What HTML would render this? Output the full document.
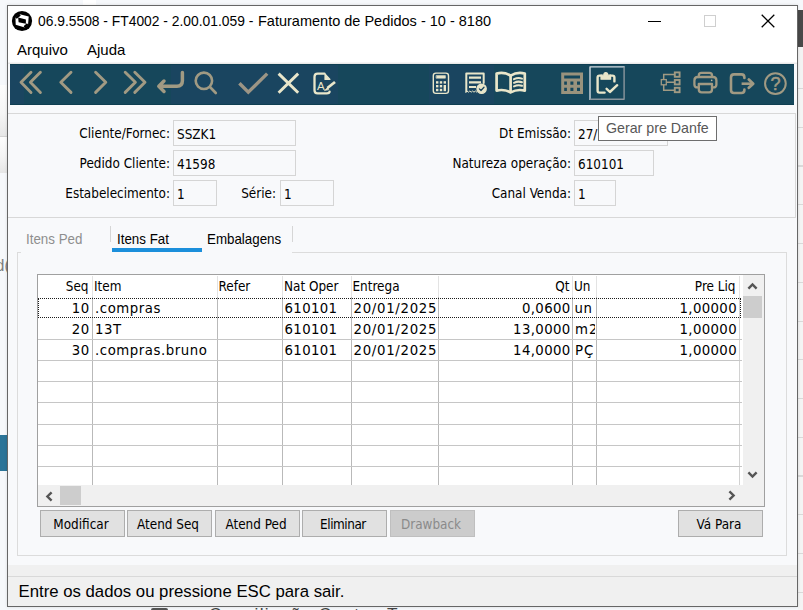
<!DOCTYPE html>
<html lang="pt-BR">
<head>
<meta charset="utf-8">
<title>Faturamento de Pedidos</title>
<style>
*{box-sizing:border-box;margin:0;padding:0}
html,body{width:803px;height:610px;overflow:hidden}
body{position:relative;background:#f6f8fb;font-family:"Liberation Sans",sans-serif;color:#000}
.a{position:absolute}
.t{position:absolute;white-space:nowrap;transform-origin:0 50%}
.tr{position:absolute;white-space:nowrap;text-align:right;transform-origin:100% 50%}
.th{font-family:"DejaVu Sans Condensed","DejaVu Sans",sans-serif;font-size:13.4px;line-height:16px;color:#000}
.vd{font-family:"DejaVu Sans",sans-serif;font-size:13.3px;letter-spacing:.36px;line-height:16px;color:#000}
.inp{position:absolute;background:#f8f9fb;border:1px solid #d5d5d5;height:26px}
.btn{position:absolute;top:510px;width:85px;height:27px;background:#e1e1e1;border:1px solid #adadad}
.bt{position:absolute;top:516.5px;width:85px;margin-left:-1.5px;text-align:center;white-space:nowrap}
.vl{position:absolute;width:1px;background:#b9b9b9}
.hl{position:absolute;height:1px;background:#c6c6c6}
svg{position:absolute;overflow:visible}
</style>
</head>
<body>
<!-- fragments of other windows behind -->
<div class="a" style="left:83px;top:0;width:13px;height:5px;background:#fff"></div>
<div class="a" style="left:0;top:85px;width:7px;height:51px;background:linear-gradient(to bottom,#fdfdfd 0,#f6f6f6 55%,#e7e7e7 100%)"></div>
<div class="a" style="left:0;top:136px;width:7px;height:1px;background:#d4d4d4"></div>
<div class="a" style="left:0;top:137px;width:7px;height:36px;background:linear-gradient(to bottom,#fdfdfd 0,#f4f4f4 55%,#e6e6e6 100%)"></div>
<div class="a" style="left:0;top:435px;width:7px;height:36px;background:#2b7498"></div>
<div class="a" style="left:798px;top:10px;width:5px;height:37px;background:#494949"></div>
<div class="a" style="left:798px;top:47px;width:5px;height:41px;background:#f3f3f3"></div>
<div class="a" style="left:798px;top:88px;width:5px;height:522px;background:repeating-linear-gradient(to bottom,#d9d9d9 0,#d9d9d9 1px,#f4f4f4 1px,#f4f4f4 38.75px)"></div>
<div class="t" style="left:-4.5px;top:256px;font-size:16px;line-height:20px;color:#7d7d7d">d(</div>
<div class="t" style="left:209px;top:605.6px;font-size:17.3px;letter-spacing:1.3px;line-height:16px;color:#444">Conciliação Contas Trans</div>
<div class="a" style="left:151px;top:608px;width:17px;height:2px;background:#555;border-radius:2px 2px 0 0"></div>

<!-- window -->
<div class="a" id="win" style="left:7px;top:5px;width:791px;height:602px;background:#f8f9fb;border:1px solid #666;box-shadow:0 0 3px rgba(0,0,0,.13)"></div>
<div class="a" style="left:8px;top:6px;width:789px;height:58px;background:#fff"></div>

<!-- title bar -->
<svg style="left:0;top:0" width="40" height="40" viewBox="0 0 40 40">
  <circle cx="22" cy="21" r="10.1" fill="#000"/>
  <path d="M19.8 14.3 L28.7 16.4 L28.1 24.4 L24.8 27.4 L15.7 24.8 L15.5 17.6 Z" fill="#fff"/>
  <path d="M18.2 17.6 L25.9 19.4 L25.9 23.8 L18.6 22.3 Z" fill="#000"/>
  <path d="M15.1 17.3 L19.5 13.9 L20.8 15.6 L16.8 18.8 Z M25 27.9 L28.4 24.7 L26.9 23.2 L23.6 26.2 Z" fill="#000"/>
</svg>
<div class="t" id="ttl" style="left:38.4px;top:12px;font-size:15px;line-height:18px;transform:scaleX(.922)">06.9.5508 - FT4002 - 2.00.01.059 - </div>
<div class="t" id="ttl2" style="left:257.6px;top:12px;font-size:15px;line-height:18px;transform:scaleX(.967)">Faturamento de Pedidos - 10 - 8180</div>
<div class="t" id="m1" style="left:17px;top:41px;font-size:15px;line-height:18px">Arquivo</div>
<div class="t" id="m2" style="left:87px;top:41px;font-size:15px;line-height:18px">Ajuda</div>
<div class="a" style="left:648px;top:21px;width:13px;height:1px;background:#000"></div>
<div class="a" style="left:704px;top:15px;width:12px;height:12px;border:1px solid #cfcfcf"></div>
<svg style="left:761px;top:14px" width="14" height="14" viewBox="0 0 14 14"><path d="M0.7 0.7 L13.3 13.3 M13.3 0.7 L0.7 13.3" stroke="#000" stroke-width="1.25" fill="none"/></svg>

<!-- toolbar -->
<div class="a" style="left:10px;top:64px;width:784px;height:41px;background:#16475b"></div>
<div class="a" style="left:10px;top:64px;width:14px;height:41px;background:#1a4560"></div>
<div class="a" style="left:171px;top:64px;width:167px;height:41px;background:#1a4560"></div>
<div class="a" style="left:429px;top:64px;width:65px;height:41px;background:#1a4560"></div>
<div class="a" style="left:10px;top:64px;width:784px;height:1px;background:#103f53"></div>
<div class="a" style="left:10px;top:104px;width:784px;height:1px;background:#0f3e51"></div>
<div class="a" style="left:8px;top:62px;width:789px;height:1px;background:#f5f5f5"></div>
<div class="a" style="left:8px;top:63px;width:789px;height:1px;background:#e9e9e9"></div>
<svg style="left:0;top:0" width="803" height="610" viewBox="0 0 803 610" fill="none" stroke-linecap="round" stroke-linejoin="round">
<g stroke="#a19a83" stroke-width="2.9">
<path d="M31 72.3 L21 82.3 L31 92.4 M40.4 72.3 L30.4 82.3 L40.4 92.4"/>
<path d="M71 72.3 L60.8 82.3 L71 92.4"/>
<path d="M95.6 72.3 L105.8 82.3 L95.6 92.4"/>
<path d="M125.2 72.3 L135.4 82.3 L125.2 92.4 M134.8 72.3 L145 82.3 L134.8 92.4"/>
<path d="M182.4 72.6 L182.4 80.8 Q182.4 86.2 177 86.2 L159.4 86.2 M164 81 L158.8 86.2 L164 91.4" stroke-width="3.5"/>
</g>
<g stroke="#a19a83" stroke-width="2.6">
<circle cx="203.9" cy="80.8" r="8.2"/>
<path d="M210 87 L215.8 93"/>
</g>
<path d="M239.4 83.2 L248.3 92.2 L267.2 73.6" stroke="#9c9585" stroke-width="3.4" stroke-linecap="butt" stroke-linejoin="miter"/>
<path d="M278.6 73.6 L298.2 92.8 M298.2 73.6 L278.6 92.8" stroke="#e9e6ca" stroke-width="2.9" stroke-linecap="butt"/>
<!-- document edit -->
<g stroke="#e9e6ca" stroke-width="2.3">
<path d="M324.4 73.6 L317.6 73.6 Q314.5 73.6 314.5 76.7 L314.5 90.3 Q314.5 93.4 317.6 93.4 L326.6 93.4 Q329.6 93.4 329.6 91.6"/>
<path d="M325 73.8 L330 79.4 L325 79.4 Z" fill="#e9e6ca" stroke-width="1.2"/>
<path d="M327.4 88 L335 82" stroke-width="2.8" stroke-linecap="butt"/><path d="M324.6 90.4 L327.8 87.2 L328.6 89.4 Z" fill="#e9e6ca" stroke-width=".6"/>
</g>
<text x="317" y="90.2" font-family="Liberation Sans, sans-serif" font-size="11.5" fill="#e9e6ca" stroke="none">A</text>
<!-- calculator -->
<g stroke="#e9e6ca">
<rect x="433.3" y="73.1" width="15.2" height="20.3" rx="2.6" stroke-width="1.4"/>
<rect x="436.4" y="75.6" width="9" height="2.6" fill="#e9e6ca" stroke-width=".6"/>
<g fill="#e9e6ca" stroke="none">
<rect x="436" y="81.2" width="2.4" height="2.4"/><rect x="439.8" y="81.2" width="2.4" height="2.4"/><rect x="443.6" y="81.2" width="2.4" height="2.4"/>
<rect x="436" y="85" width="2.4" height="2.4"/><rect x="439.8" y="85" width="2.4" height="2.4"/><rect x="443.6" y="85" width="2.4" height="6.2"/>
<rect x="436" y="88.8" width="2.4" height="2.4"/><rect x="439.8" y="88.8" width="2.4" height="2.4"/>
</g>
</g>
<!-- receipt with check -->
<g stroke="#e9e6ca" stroke-width="2">
<path d="M466.3 91.6 L466.3 73.5 L483.7 73.5 L483.7 83"/>
<path d="M469 77.6 L481 77.6 M469 82.3 L481 82.3 M469 87 L476 87" stroke-width="2.2" stroke-linecap="butt"/>
<path d="M465.6 92.2 l1.4 -1.2 l1.4 1.2 l1.4 -1.2 l1.4 1.2 l1.4 -1.2 l1.4 1.2 l1.4 -1.2 l1.4 1.2" stroke-width="1"/>
<circle cx="481.6" cy="88.8" r="4.6" fill="#e9e6ca" stroke-width="1.4"/>
<path d="M479.4 88.9 L481 90.5 L484 87.3" stroke="#1a4560" stroke-width="1.3"/>
</g>
<!-- book -->
<g stroke="#e9e6ca" stroke-width="2.7">
<path d="M510.6 75.6 Q504 71.6 496.6 73.6 L496.6 90.6 Q504 88.8 510.6 92.4 Q517.4 88.8 524.8 90.6 L524.8 73.6 Q517.4 71.6 510.6 75.6 Z"/>
<path d="M510.6 75.6 L510.6 92"/>
<path d="M514 79.2 Q518 77.2 522 78.6 M514 82.8 Q518 80.8 522 82.2 M514 86.4 Q518 84.4 522 85.8" stroke-width="2"/>
</g>
<!-- table -->
<path fill-rule="evenodd" fill="#9a937d" stroke="none" d="M561.2 72.6 H583 V94 H561.2 Z M564.2 75.4 V78.6 H580 V75.4 Z M564.2 81.6 V84.8 H566.9 V81.6 Z M570.4 81.6 V84.8 H573.4 V81.6 Z M577 81.6 V84.8 H580 V81.6 Z M564.2 87.8 V91 H566.9 V87.8 Z M570.4 87.8 V91 H573.4 V87.8 Z M577 87.8 V91 H580 V87.8 Z"/>
<!-- focus frame + clipboard check -->
<path d="M590 99.2 V66.9 H624" stroke="#d3dbe1" stroke-width="1.4" stroke-linecap="square"/><path d="M624.1 67.6 V99.2 H590.6" stroke="#8b969d" stroke-width="1.4" stroke-linecap="square"/>
<g stroke="#e9e6ca" stroke-width="2.4">
<path d="M601 75.6 L599.4 75.6 Q597.6 75.6 597.6 77.4 L597.6 90.8 Q597.6 92.6 599.4 92.6 L604.6 92.6"/>
<path d="M610.4 75.6 L612.4 75.6 Q614.4 75.6 614.4 77.4 L614.4 81.4"/>
<path d="M601 79.2 L601 75.2 L603.8 75.2 Q603.9 72.6 605.8 72.6 Q607.7 72.6 607.8 75.2 L610.6 75.2 L610.6 79.2 Z" fill="#e9e6ca" stroke-width="1.2"/>
<path d="M606.6 88.8 L609.9 92 L617.2 85.2" stroke-width="2.4"/>
</g>
<!-- hierarchy -->
<g stroke="#a19a83" stroke-width="1.3" stroke-linejoin="miter" stroke-linecap="butt">
<rect x="661.3" y="79.6" width="5" height="5.2"/>
<rect x="674.8" y="72.4" width="4.8" height="4.4" stroke-width="1.9"/>
<rect x="674.8" y="80" width="4.8" height="4.4" stroke-width="1.9"/>
<rect x="674.8" y="87.8" width="4.8" height="4.4" stroke-width="1.9"/>
<path d="M663.7 79.6 V74.4 H674.8 M666.3 82.2 H674.8 M663.7 84.8 V90.2 H674.8" stroke-width="1.5"/>
</g>
<!-- printer -->
<g stroke="#a19a83" stroke-width="2.3">
<path d="M698.8 77 L698.8 75.4 Q698.8 72.8 701.4 72.8 L709.4 72.8 Q712 72.8 712 75.4 L712 77"/>
<path d="M698.8 87.4 L697.4 87.4 Q694.4 87.4 694.4 84.4 L694.4 80.4 Q694.4 77 697.8 77 L713 77 Q716.4 77 716.4 80.4 L716.4 84.4 Q716.4 87.4 713.4 87.4 L712 87.4"/>
<path d="M698.8 84 L712 84 L712 89.6 Q712 92.4 709.2 92.4 L701.6 92.4 Q698.8 92.4 698.8 89.6 Z"/>
</g>
<circle cx="711.7" cy="80.4" r="0.8" fill="#bdb8a3" stroke="none"/>
<!-- exit -->
<g stroke="#a19a83" stroke-width="2.6">
<path d="M744.4 78 L744.4 77.4 Q744.4 74.4 741.4 74.4 L734 74.4 Q731 74.4 731 77.4 L731 90 Q731 93 734 93 L741.4 93 Q744.4 93 744.4 90 L744.4 89.6"/>
<path d="M741.6 83.7 L751.6 83.7" stroke-linecap="butt"/><path d="M748.8 79.6 L753.2 83.7 L748.8 87.8" stroke-width="2.8"/>
</g>
<!-- help -->
<circle cx="775.4" cy="83.6" r="10.35" stroke="#a19a83" stroke-width="2"/>
<text x="775.4" y="90.2" text-anchor="middle" font-family="Liberation Sans, sans-serif" font-size="18" fill="#a19a83" stroke="#a19a83" stroke-width=".5">?</text>
</svg>

<!-- upper panel -->
<div class="a" style="left:8px;top:113px;width:788px;height:105px;border:1px solid #d8d8d8;border-left:none;background:#f8f9fb"></div>

<div class="tr th" id="l1" style="right:633px;top:126px">Cliente/Fornec:</div>
<div class="inp" style="left:173px;top:120px;width:123px"></div>
<div class="t th" id="i1" style="left:177px;top:127px">SSZK1</div>
<div class="tr th" id="l2" style="right:633px;top:156px">Pedido Cliente:</div>
<div class="inp" style="left:173px;top:150px;width:123px"></div>
<div class="t th" id="i2" style="left:177px;top:157px">41598</div>
<div class="tr th" id="l3" style="right:633px;top:186px">Estabelecimento:</div>
<div class="inp" style="left:173px;top:180px;width:44px"></div>
<div class="t th" id="i3" style="left:177px;top:187px">1</div>
<div class="tr th" id="l4" style="right:527px;top:186px">Série:</div>
<div class="inp" style="left:280px;top:180px;width:54px"></div>
<div class="t th" id="i4" style="left:284px;top:187px">1</div>

<div class="tr th" id="l5" style="right:232px;top:126px">Dt Emissão:</div>
<div class="inp" style="left:574px;top:120px;width:94px"></div>
<div class="t th" id="i5" style="left:578px;top:127px">27/</div>
<div class="tr th" id="l6" style="right:232px;top:156px">Natureza operação:</div>
<div class="inp" style="left:574px;top:150px;width:80px"></div>
<div class="t th" id="i6" style="left:578px;top:157px">610101</div>
<div class="tr th" id="l7" style="right:232px;top:186px">Canal Venda:</div>
<div class="inp" style="left:574px;top:180px;width:42px"></div>
<div class="t th" id="i7" style="left:578px;top:187px">1</div>

<!-- tooltip -->
<div class="a" style="left:598px;top:116px;width:119px;height:25px;background:#fff;border:1px solid #6e6e6e"></div>
<div class="t" id="tip" style="left:606px;top:119px;font-size:15px;line-height:18px;color:#575757;transform:scaleX(.948)">Gerar pre Danfe</div>

<!-- tabs -->
<div class="t" id="tb1" style="left:25.6px;top:231px;font-size:15px;line-height:16px;color:#8e8e8e;transform:scaleX(.89)">Itens Ped</div>
<div class="a" style="left:110px;top:226px;width:1px;height:16px;background:#d6d6d6"></div>
<div class="t" id="tb2" style="left:116.5px;top:231px;font-size:15px;line-height:16px;transform:scaleX(.89)">Itens Fat</div>
<div class="a" style="left:112px;top:248px;width:90px;height:4px;background:#1b8fdb"></div>
<div class="t" id="tb3" style="left:207px;top:231px;font-size:15px;line-height:16px;transform:scaleX(.89)">Embalagens</div>
<div class="a" style="left:292px;top:226px;width:1px;height:16px;background:#d6d6d6"></div>

<!-- tab page frame -->
<div class="a" style="left:17px;top:252px;width:770px;height:304px;border:1px solid #dcdcdc;border-top:none"></div>
<div class="a" style="left:17px;top:252px;width:4px;height:1px;background:#dcdcdc"></div>
<div class="a" style="left:292px;top:252px;width:495px;height:1px;background:#dcdcdc"></div>

<!-- grid -->
<div class="a" id="grid" style="left:37px;top:274px;width:728px;height:233px;background:#fff;border:1px solid #a0a0a0"></div>
<div class="a" style="left:743px;top:275px;width:21px;height:231px;background:#f0f0f0"></div>
<div class="a" style="left:38px;top:485px;width:705px;height:21px;background:#f0f0f0"></div>
<div class="a" style="left:743px;top:296px;width:19px;height:22px;background:#cdcdcd"></div>
<div class="a" style="left:60px;top:486px;width:21px;height:19px;background:#cdcdcd"></div>
<svg style="left:746.8px;top:282px" width="11" height="8" viewBox="0 0 11 8"><path d="M1.4 6.6 L5.5 2.4 L9.6 6.6" fill="none" stroke="#555" stroke-width="2.4"/></svg>
<svg style="left:746.8px;top:471px" width="11" height="8" viewBox="0 0 11 8"><path d="M1.4 1.4 L5.5 5.6 L9.6 1.4" fill="none" stroke="#555" stroke-width="2.4"/></svg>
<svg style="left:44.5px;top:490.5px" width="8" height="11" viewBox="0 0 8 11"><path d="M6.6 1.4 L2.4 5.5 L6.6 9.6" fill="none" stroke="#555" stroke-width="2.4"/></svg>
<svg style="left:727.5px;top:489.5px" width="8" height="11" viewBox="0 0 8 11"><path d="M1.4 1.4 L5.6 5.5 L1.4 9.6" fill="none" stroke="#555" stroke-width="2.4"/></svg>
<div class="vl" style="left:92px;top:276px;height:21px;background:#e3e3e3"></div>
<div class="vl" style="left:92px;top:297px;height:188px"></div>
<div class="vl" style="left:217px;top:276px;height:21px;background:#e3e3e3"></div>
<div class="vl" style="left:217px;top:297px;height:188px"></div>
<div class="vl" style="left:282px;top:276px;height:21px;background:#e3e3e3"></div>
<div class="vl" style="left:282px;top:297px;height:188px"></div>
<div class="vl" style="left:351px;top:276px;height:21px;background:#e3e3e3"></div>
<div class="vl" style="left:351px;top:297px;height:188px"></div>
<div class="vl" style="left:438px;top:276px;height:21px;background:#e3e3e3"></div>
<div class="vl" style="left:438px;top:297px;height:188px"></div>
<div class="vl" style="left:572px;top:276px;height:21px;background:#e3e3e3"></div>
<div class="vl" style="left:572px;top:297px;height:188px"></div>
<div class="vl" style="left:596px;top:276px;height:21px;background:#e3e3e3"></div>
<div class="vl" style="left:596px;top:297px;height:188px"></div>
<div class="vl" style="left:739px;top:276px;height:21px;background:#e3e3e3"></div>
<div class="vl" style="left:739px;top:297px;height:188px;background:#d2d2d2"></div>
<div class="hl" style="left:38px;top:339px;width:704px"></div>
<div class="hl" style="left:38px;top:360px;width:704px"></div>
<div class="hl" style="left:38px;top:381px;width:704px"></div>
<div class="hl" style="left:38px;top:402px;width:704px"></div>
<div class="hl" style="left:38px;top:424px;width:704px"></div>
<div class="hl" style="left:38px;top:445px;width:704px"></div>
<div class="hl" style="left:38px;top:466px;width:704px"></div>
<div class="a" style="left:38px;top:298px;width:703px;height:20px;border:1px dotted #1c1c1c"></div>
<div class="tr th" style="right:714.5px;top:279px">Seq</div>
<div class="t th" style="left:94px;top:279px">Item</div>
<div class="t th" style="left:218.5px;top:279px">Refer</div>
<div class="t th" style="left:284px;top:279px">Nat Oper</div>
<div class="t th" style="left:352.5px;top:279px">Entrega</div>
<div class="tr th" style="right:233.5px;top:279px">Qt</div>
<div class="t th" style="left:574px;top:279px">Un</div>
<div class="tr th" style="right:67.5px;top:279px">Pre Liq</div>
<div class="tr vd" style="right:713.5px;top:301px">10</div>
<div class="t vd" style="letter-spacing:.55px;left:95px;top:301px">.compras</div>
<div class="t vd" style="left:284.5px;top:301px">610101</div>
<div class="t vd" style="letter-spacing:.7px;left:353.5px;top:301px">20/01/2025</div>
<div class="tr vd" style="right:232.4px;top:301px">0,0600</div>
<div class="t vd" style="left:574.6px;top:301px;width:20px;overflow:hidden">un</div>
<div class="tr vd" style="right:66px;top:301px">1,00000</div>
<div class="tr vd" style="right:713.5px;top:322px">20</div>
<div class="t vd" style="letter-spacing:.55px;left:95px;top:322px">13T</div>
<div class="t vd" style="left:284.5px;top:322px">610101</div>
<div class="t vd" style="letter-spacing:.7px;left:353.5px;top:322px">20/01/2025</div>
<div class="tr vd" style="right:232.4px;top:322px">13,0000</div>
<div class="t vd" style="letter-spacing:1px;left:575px;top:322px;width:19.6px;overflow:hidden">m2</div>
<div class="tr vd" style="right:66px;top:322px">1,00000</div>
<div class="tr vd" style="right:713.5px;top:343px">30</div>
<div class="t vd" style="letter-spacing:.55px;left:95px;top:343px">.compras.bruno</div>
<div class="t vd" style="left:284.5px;top:343px">610101</div>
<div class="t vd" style="letter-spacing:.7px;left:353.5px;top:343px">20/01/2025</div>
<div class="tr vd" style="right:232.4px;top:343px">14,0000</div>
<div class="t vd" style="letter-spacing:1px;left:575px;top:343px;width:19.6px;overflow:hidden">PÇ</div>
<div class="tr vd" style="right:66px;top:343px">1,00000</div>

<!-- buttons -->
<div class="btn" style="left:40px"></div><div class="bt th" style="left:40px">Modificar</div>
<div class="btn" style="left:127px"></div><div class="bt th" style="left:127px">Atend Seq</div>
<div class="btn" style="left:215px"></div><div class="bt th" style="left:215px">Atend Ped</div>
<div class="btn" style="left:302px"></div><div class="bt th" style="left:302px;letter-spacing:-.45px">Eliminar</div>
<div class="btn" style="left:390px;background:#cccccc;border-color:#bfbfbf"></div><div class="bt th" style="left:390px;color:#8a8a8a">Drawback</div>
<div class="btn" style="left:678px"></div><div class="bt th" style="left:678px">Vá Para</div>

<!-- bottom band + status bar -->
<div class="a" style="left:8px;top:565px;width:789px;height:41px;background:#f0f0f0"></div>
<div class="a" style="left:8px;top:576px;width:789px;height:1px;background:#d9d9d9"></div>
<div class="t" id="status" style="left:18.5px;top:582px;font-size:16.75px;line-height:20px">Entre os dados ou pressione ESC para sair.</div>
</body>
</html>
